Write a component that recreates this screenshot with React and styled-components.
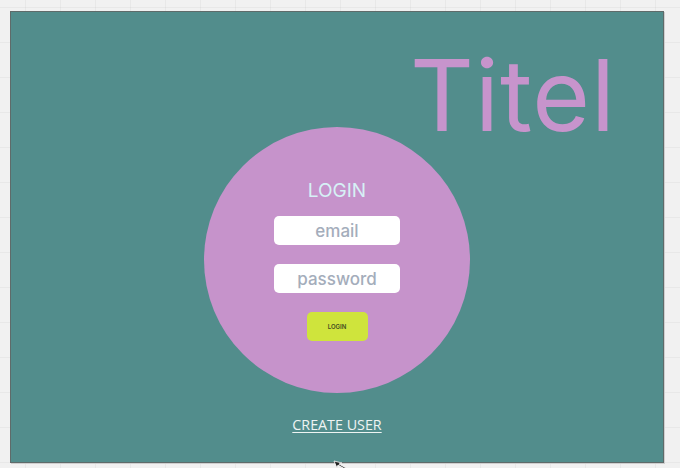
import React from "react";
import styled, { createGlobalStyle } from "styled-components";

const GlobalStyle = createGlobalStyle`
  html, body {
    margin: 0;
    padding: 0;
    background-color: #f1f1f1;
    background-image:
      linear-gradient(to bottom, rgba(0, 0, 0, 0.035) 1px, transparent 1px),
      linear-gradient(to right, rgba(0, 0, 0, 0.035) 1px, transparent 1px);
    background-size: 35px 35px;
    background-position: 0 7px, 25px 0;
    font-family: "Inter", "Liberation Sans", sans-serif;
    overflow: hidden;
  }
`;

const Page = styled.div`
  width: 680px;
  height: 468px;
  position: relative;
  overflow: hidden;
`;

const Caption = styled.p`
  margin: -13px 0 0 30px;
  height: 13px;
  font-family: "Open Sans", sans-serif;
  font-size: 16px;
  line-height: 16px;
  color: #8a8a8a;
  overflow: hidden;
`;

const Frame = styled.main`
  margin: 11px 0 0 10px;
  width: 652px;
  height: 450px;
  border: 1px solid #5f6b6a;
  background: #528d8c;
  display: flex;
  flex-direction: column;
  align-items: center;
  box-shadow: 1px 1px 0 #cfcfcf;
`;

const Header = styled.header`
  align-self: stretch;
  height: 115px;
  display: flex;
  justify-content: flex-end;
  padding-right: 47px;
`;

const Title = styled.h1`
  margin: 34px 0 0;
  font-family: "Inter", sans-serif;
  font-weight: 400;
  font-size: 99px;
  line-height: 1;
  letter-spacing: 1px;
  color: #c794cc;
`;

const Circle = styled.section`
  width: 266px;
  height: 266px;
  border-radius: 50%;
  background: #c693cb;
  display: flex;
  flex-direction: column;
  align-items: center;
  box-sizing: border-box;
  padding-top: 52px;
`;

const LoginTitle = styled.h2`
  margin: 0 0 13px;
  font-family: "Inter", sans-serif;
  font-weight: 400;
  font-size: 19px;
  line-height: 24px;
  color: #d6f1f6;
`;

const Field = styled.input`
  width: 126px;
  height: 29px;
  box-sizing: border-box;
  border: none;
  border-radius: 5px;
  background: #ffffff;
  margin-bottom: ${(p) => p.$gap}px;
  text-align: center;
  font-family: "Inter", sans-serif;
  font-weight: 500;
  font-size: 17px;
  color: #a4adbb;
  outline: none;
  padding: 0;

  &::placeholder {
    color: #a4adbb;
  }
`;

const LoginButton = styled.button`
  width: 61px;
  height: 29px;
  border: none;
  border-radius: 5px;
  background: #cfe43c;
  font-family: "Inter", sans-serif;
  font-weight: 600;
  font-size: 6px;
  color: #3f4a22;
  padding: 0;
`;

const CreateLink = styled.a`
  margin-top: 23px;
  font-family: "Open Sans", sans-serif;
  font-size: 14.3px;
  line-height: 18px;
  color: #eef4f3;
  text-decoration: underline;
  text-underline-offset: 2px;
`;

const Cursor = styled.svg`
  position: absolute;
  left: 333px;
  top: 460px;
`;

export default function App() {
  return (
    <>
      <GlobalStyle />
      <Page>
        <Caption>PAGE 1 - LOGIN OF CHAT ROOM</Caption>
        <Frame>
          <Header>
            <Title>Titel</Title>
          </Header>
          <Circle>
            <LoginTitle>LOGIN</LoginTitle>
            <Field placeholder="email" $gap={19} />
            <Field placeholder="password" $gap={19} />
            <LoginButton>LOGIN</LoginButton>
          </Circle>
          <CreateLink href="#">CREATE USER</CreateLink>
        </Frame>
        <Cursor width="14" height="10" viewBox="0 0 14 10">
          <path d="M1 1 L4 8 L5 5 L12 9 L13 8 L6 4 L9 3 Z" fill="#222" stroke="#fff" strokeWidth="0.8" />
        </Cursor>
      </Page>
    </>
  );
}
